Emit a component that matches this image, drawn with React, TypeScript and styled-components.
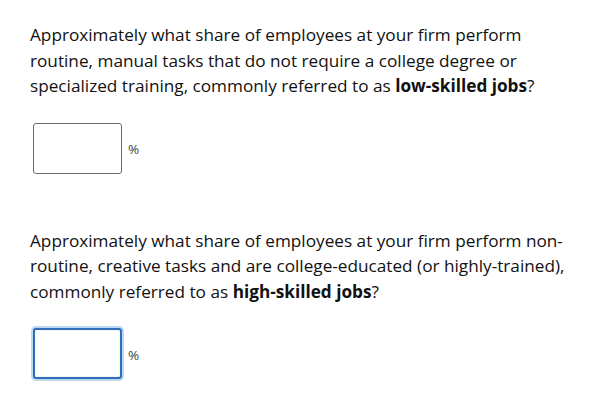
import styled, { createGlobalStyle } from 'styled-components';

const GlobalStyle = createGlobalStyle`
  body {
    margin: 0;
    background: #ffffff;
    font-family: 'Open Sans', 'Liberation Sans', sans-serif;
    color: #000000;
  }
`;

const questions = [
  {
    id: 'low',
    text: 'Approximately what share of employees at your firm perform routine, manual tasks that do not require a college degree or specialized training, commonly referred to as ',
    bold: 'low-skilled jobs',
    focused: false,
  },
  {
    id: 'high',
    text: 'Approximately what share of employees at your firm perform non-routine, creative tasks and are college-educated (or highly-trained), commonly referred to as ',
    bold: 'high-skilled jobs',
    focused: true,
  },
];

const App = () => {
  return (
    <>
      <GlobalStyle />
      <Page>
        {questions.map((q) => (
          <Question key={q.id}>
            <QuestionText>
              {q.text}
              <strong>{q.bold}</strong>?
            </QuestionText>
            <AnswerRow>
              <PercentInput type='text' $focused={q.focused} aria-label={q.bold} />
              <Unit>%</Unit>
            </AnswerRow>
          </Question>
        ))}
      </Page>
    </>
  );
};

export default App;

const Page = styled.div`
  width: 600px;
  height: 407px;
  box-sizing: border-box;
  padding: 22px 28px 0 30px;
  display: flex;
  flex-direction: column;
  gap: 54px;
  overflow: hidden;
`;

const Question = styled.div`
  display: flex;
  flex-direction: column;
  gap: 24px;
`;

const QuestionText = styled.p`
  margin: 0;
  font-size: 17.2px;
  line-height: 25.5px;
  color: #111;
  & strong {
    font-weight: 700;
  }
`;

const AnswerRow = styled.div`
  display: flex;
  align-items: center;
  padding-left: 3px;
  gap: 6px;
`;

const PercentInput = styled.input<{ $focused: boolean }>`
  width: 89px;
  height: 51px;
  box-sizing: border-box;
  border-radius: 3px;
  outline: none;
  background: #fff;
  padding: 0 6px;
  border: ${(p) => (p.$focused ? '2px solid #2f6fba' : '1px solid #6b6b6b')};
  box-shadow: ${(p) => (p.$focused ? '0 0 0 2px #bcd8f2, inset 0 0 2px rgba(0,0,0,0.15)' : 'none')};
`;

const Unit = styled.span`
  font-size: 13.5px;
  color: #444;
  padding-top: 2px;
`;
